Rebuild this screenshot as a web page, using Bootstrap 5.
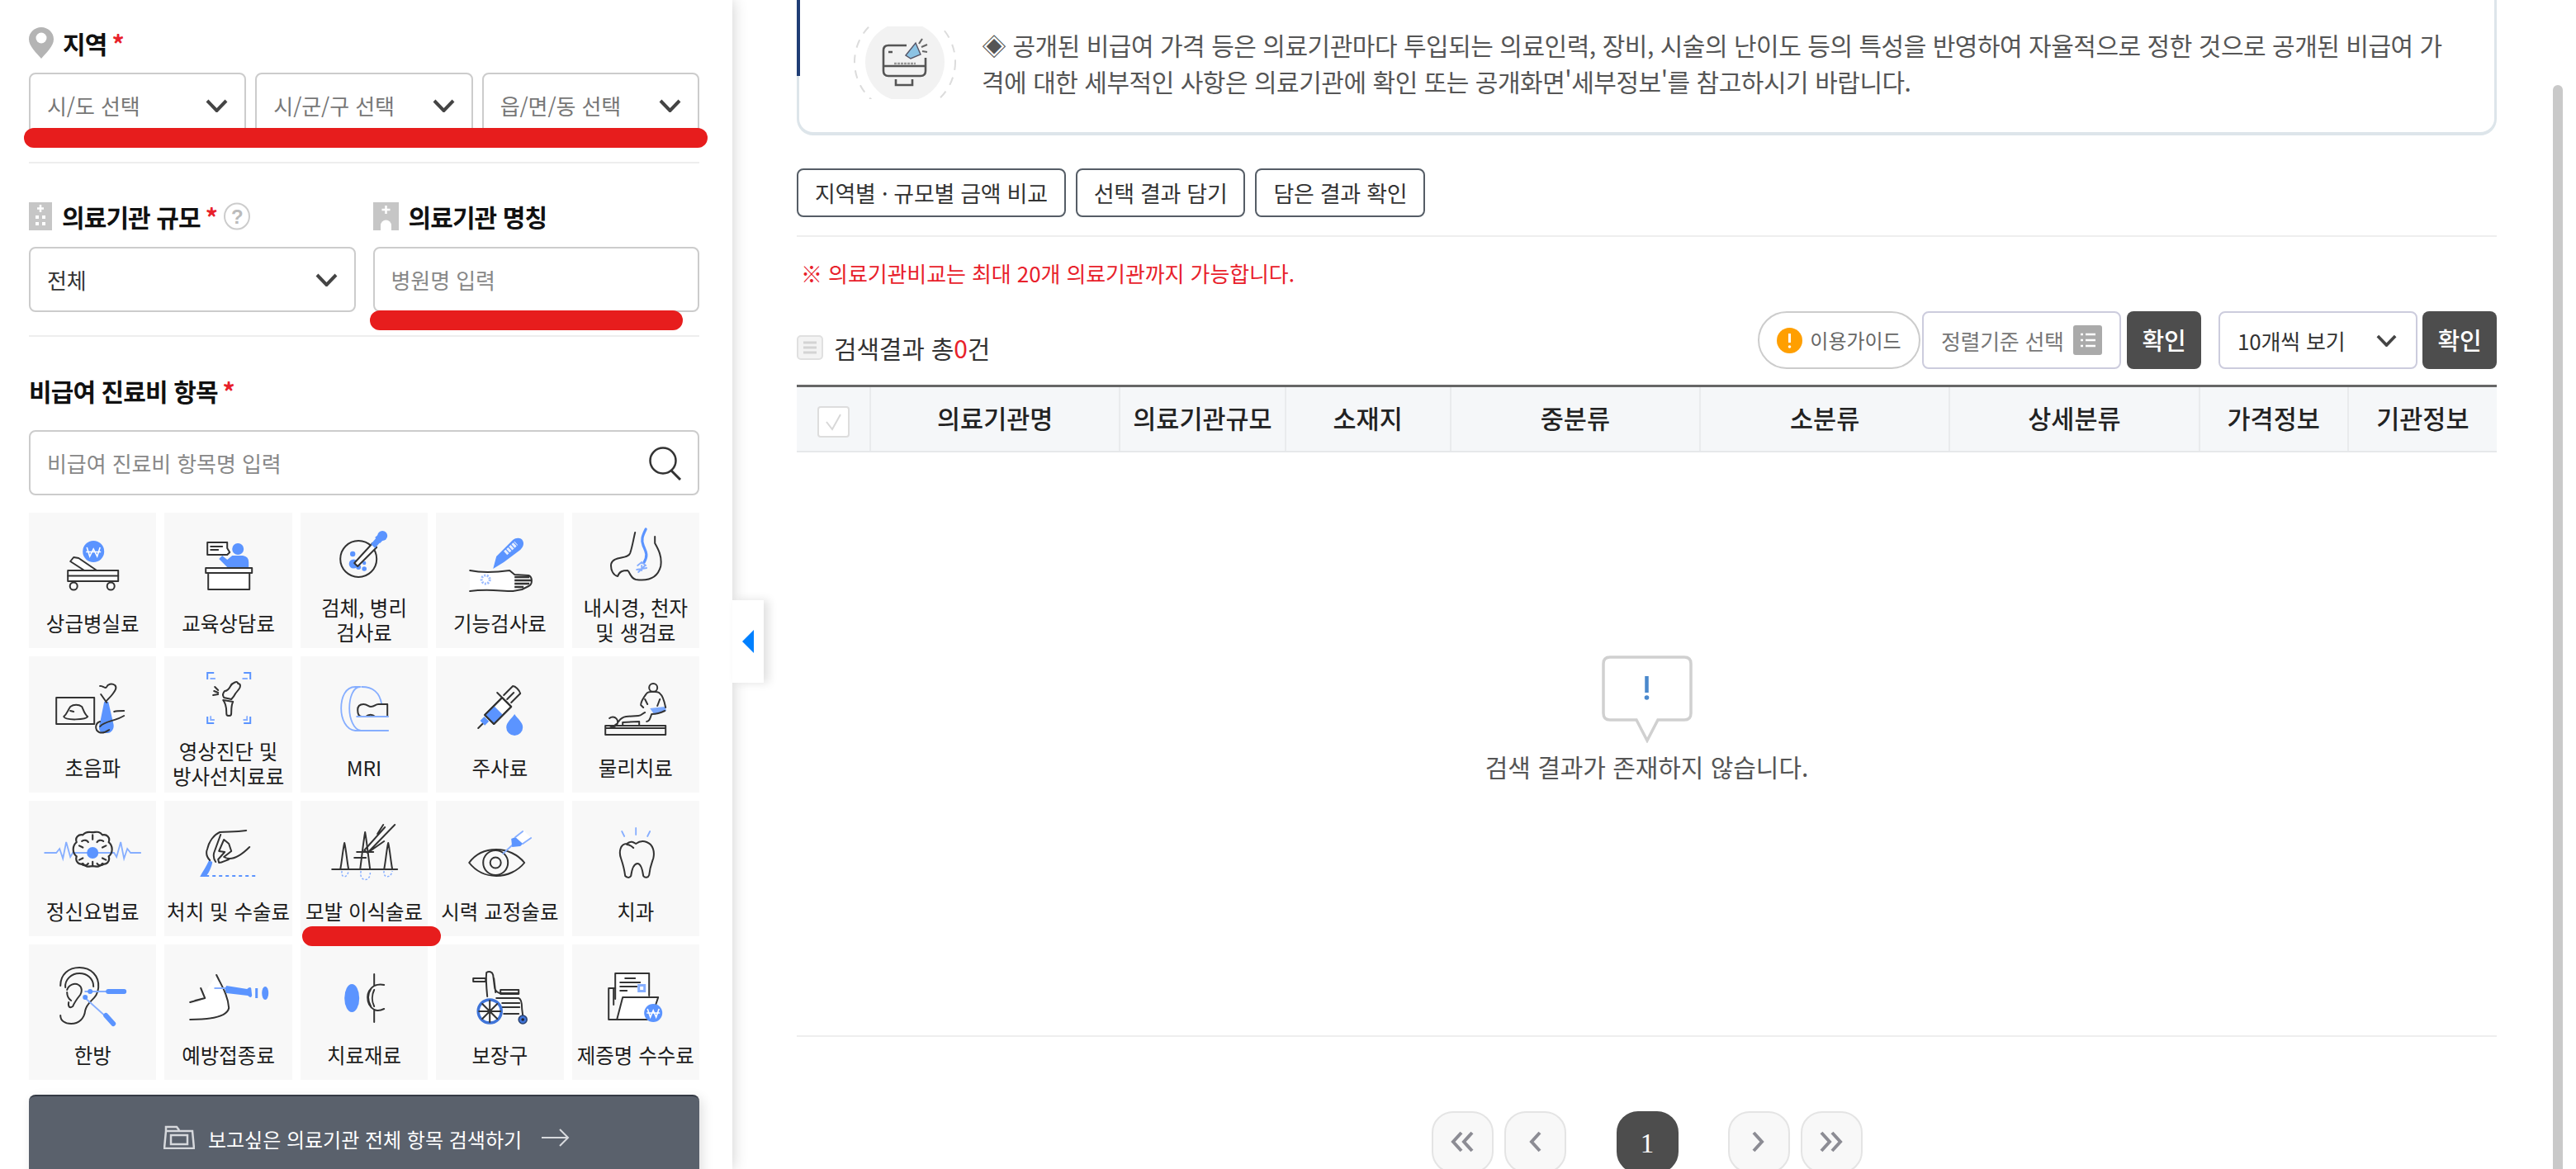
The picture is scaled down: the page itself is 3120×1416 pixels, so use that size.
<!DOCTYPE html>
<html lang="ko">
<head>
<meta charset="utf-8">
<title>비급여 진료비 검색</title>
<link href="https://cdn.jsdelivr.net/npm/bootstrap@5.3.0/dist/css/bootstrap.min.css" rel="stylesheet">
<style>
html,body{height:1416px;overflow:hidden;background:#fff}
body{font-family:"Noto Sans CJK KR","Noto Sans",sans-serif;color:#222;font-size:26px}
.side{width:887px;flex:none;height:1416px;padding:33px 40px 0 35px;position:relative;z-index:2;background:#fff;box-shadow:0 0 18px rgba(0,0,0,.2)}
.lbl{font-size:30px;font-weight:700;letter-spacing:-.9px;color:#111;line-height:34px;margin:0}
.star{color:#e8212b;margin-left:6px;font-weight:700}
.lbl-a{height:38px}
.lbl-a svg{margin-right:11px}
.lbl-b svg{margin-right:12px}
.rule{height:2px;background:#eee}
.rule-t{margin-top:22px}
.sel3{display:grid;grid-template-columns:repeat(3,1fr);column-gap:11px;margin-top:17px}
.two{display:grid;grid-template-columns:1fr 1fr;column-gap:21px}
.form-select.fsel,.form-control.fctl{height:79px;font-size:26px;padding:0 50px 0 20px;border:2px solid #ccc;border-radius:8px;color:#333;letter-spacing:-.1px;box-shadow:none;font-family:inherit}
.form-select.fsel{background-image:url("data:image/svg+xml,%3Csvg xmlns='http://www.w3.org/2000/svg' viewBox='0 0 27 16'%3E%3Cpath d='M2 2l11.500 12L25 2' fill='none' stroke='%23444' stroke-width='4'/%3E%3C/svg%3E");background-size:27px 16px;background-position:right 20px center}
.form-select.dim{color:#777}
.form-control.fctl::placeholder{color:#888;opacity:1}
.gap29{margin-top:29px}
.gap28{margin-top:28px}
.r1{margin-top:47px;height:34px}
.r2{margin-top:20px}
.ttl{margin-top:48px}
.srch{margin-top:31px;position:relative}
.srch svg{position:absolute;right:21px;top:20px}
.qmark{margin-left:8px}
.tiles{display:grid;grid-template-columns:repeat(5,1fr);grid-auto-rows:164.300px;gap:10px;margin-top:21px}
.tile{background:#f8f8f8;display:flex;flex-direction:column;justify-content:space-between;text-align:center;font-size:24.500px;line-height:30px;color:#1c1c1c;padding-bottom:15px;white-space:nowrap}
.tile svg{display:block;width:100%;height:100px;flex:none}
.gs{fill:none;stroke:#333;stroke-width:2;stroke-linecap:round;stroke-linejoin:round}
.gw{fill:#fff;stroke:#333;stroke-width:2;stroke-linecap:round;stroke-linejoin:round}
.bf{fill:#5b94ff}
.bl{fill:none;stroke:#86aeff;stroke-width:1.800;stroke-linecap:round}
.wh{fill:none;stroke:#fff;stroke-width:1.600}
.allbtn{margin-top:18px;height:120px;width:100%;background:#5a616c;border:0;border-top:2px solid #343a44;border-radius:8px 8px 0 0;color:#fff;font-size:24px;display:flex;align-items:flex-start;justify-content:center;padding:34px 0 0 6px;gap:16px;box-shadow:4px 4px 14px rgba(0,0,0,.12)}
.arrow-ic{margin-top:4px}
.mark-bar{position:absolute;background:#e71d1d;border-radius:12px}
.mb1{left:29px;top:155px;width:828px;height:24px}
.mb2{left:448px;top:376px;width:379px;height:24px}
.mb3{left:366px;top:1122px;width:168px;height:24px}
.tab{position:absolute;left:887px;top:727px;width:38px;height:100px;background:#fff;box-shadow:6px 0 12px rgba(0,0,0,.12);display:flex;align-items:center;justify-content:flex-start;padding-left:12px}
.main{flex:1;min-width:0;height:1416px;padding:0 96px 0 78px;position:relative}
.sbar{position:absolute;right:16px;top:103px;bottom:0;width:12px;background:#c9c9c9;border-radius:6px 6px 0 0}
.notice{margin-top:-20px;height:184px;border:3px solid #dde5ea;border-bottom-width:4px;border-radius:20px;padding:49px 0 0 66px;position:relative;font-size:30px;line-height:44px;color:#555;letter-spacing:-.48px;display:flex;gap:31px;white-space:nowrap}
.notice::before{content:"";position:absolute;left:-3px;top:0;width:4px;height:109px;background:#1f3d75}
.notice svg{flex:none;margin-top:0}
.acts{margin-top:40px;gap:12px}
.btn.act{height:59px;border:2px solid #555d66;border-radius:8px;background:#fff;color:#333;font-size:27px;line-height:1;padding:0 20px;letter-spacing:-.3px;display:flex;align-items:center}
.warn{margin-top:24px;line-height:40px;color:#e8212b;font-size:26px;padding-left:5px;letter-spacing:-.1px}
.resrow{margin-top:26px;height:70px}
.restit{font-size:30px;color:#333;letter-spacing:-.2px;gap:13px;line-height:1;padding-top:18px}
.restit b{color:#e8212b;font-weight:400}
.pill{height:70px;width:197px;border:2px solid #ccc;border-radius:35px;color:#666;font-size:24px;gap:9px;background:#fff;margin-right:2px}
.sortbox{height:70px;width:241px;border:2px solid #ccd;border-radius:8px;color:#777;font-size:26px;padding:0 21px;background:#fff;margin-right:7px;letter-spacing:-.3px;white-space:nowrap}
.btn.ok{width:90px;height:70px;background:#4d4d4d;color:#fff;border:0;border-radius:8px;font-size:29px;font-weight:500;padding:0;letter-spacing:-.3px}
.form-select.fsel.cnt{width:241px;height:70px;margin:0 6px 0 21px;border-color:#ccd;background-size:25px 15px;background-position:right 23px center;padding-left:21px;letter-spacing:-.2px}
.thead-tb{table-layout:fixed;width:100%;margin:19px 0 0}
.thead-tb th{height:79px;background:#f5f7f9;border-top:3px solid #666;border-bottom:2px solid #e6e8ea;border-right:2px solid #e9ebed;font-size:30.500px;font-weight:500;color:#222;text-align:center;vertical-align:middle;padding:0;white-space:nowrap}
.thead-tb th:last-child{border-right:0}
.c1{width:89px}.c2,.c5,.c6,.c7{width:302px}.c3,.c4{width:200px}.c8,.c9{width:180px}
.empty{padding-top:246px;text-align:center;height:706px}
.empty svg{display:block;margin:0 auto 6px}
.empty p{font-size:30px;line-height:44px;color:#555;margin:0;letter-spacing:-.05px}
.pagin{margin:90px 0 0;padding:0;justify-content:center}
.pagin .page-link{width:75px;height:75px;display:flex;align-items:center;justify-content:center;background:#f8f8f8;border:2px solid #e4e4e4;border-radius:26px;padding:0;color:#888;margin:0}
.pagin .page-item.active .page-link{background:#4d4d4d;border-color:#4d4d4d;color:#fff;font-size:33px;padding-top:6px;font-family:"Liberation Serif",serif}
.pagin .page-item:not(:first-child) .page-link{margin-left:0}
.pagin .page-item:first-child .page-link,.pagin .page-item:last-child .page-link{border-radius:26px}
.pg-a{margin-right:13px}.pg-b{margin-right:61px}.pg-c{margin-right:60px}
</style>
</head>
<body class="d-flex">

<aside class="side">
  <h2 class="lbl lbl-a d-flex align-items-center">
    <svg width="30" height="38" viewBox="0 0 30 38"><path d="M15 0C6.700 0 0 6.500 0 14.500 0 23 9 31 15 38c6-7 15-15 15-23.500C30 6.500 23.300 0 15 0z" fill="#b4b4b4"/><circle cx="15" cy="13" r="6.500" fill="#fff"/></svg>
    지역<span class="star">*</span>
  </h2>
  <div class="sel3">
    <select class="form-select fsel dim"><option>시/도 선택</option></select>
    <select class="form-select fsel dim"><option>시/군/구 선택</option></select>
    <select class="form-select fsel dim"><option>읍/면/동 선택</option></select>
  </div>
  <div class="rule gap29"></div>

  <div class="two r1">
    <h2 class="lbl lbl-b d-flex align-items-center">
      <svg width="28" height="34" viewBox="0 0 28 34"><rect width="28" height="34" fill="#c6c6c6"/><path d="M14 3v9M10 7.500h8" stroke="#fff" stroke-width="2.500"/><g fill="#fff"><rect x="8" y="16" width="4" height="4"/><rect x="16" y="16" width="4" height="4"/><rect x="8" y="24" width="4" height="4"/><rect x="16" y="24" width="4" height="4"/></g></svg>
      의료기관 규모<span class="star">*</span>
      <svg class="qmark" width="32" height="34" viewBox="0 0 32 34"><ellipse cx="16" cy="17" rx="15" ry="15.500" fill="#fff" stroke="#ccc" stroke-width="2"/><text x="16" y="26" text-anchor="middle" font-size="24" fill="#bbb" font-family="Liberation Sans,sans-serif">?</text></svg>
    </h2>
    <h2 class="lbl lbl-b d-flex align-items-center">
      <svg width="31" height="34" viewBox="0 0 31 34"><rect width="31" height="34" fill="#c6c6c6"/><path d="M15.500 4v10M10.500 9h10" stroke="#fff" stroke-width="2.500"/><path d="M9 34v-6a6.500 6.500 0 0 1 13 0v6z" fill="#fff"/></svg>
      의료기관 명칭
    </h2>
  </div>
  <div class="two r2">
    <select class="form-select fsel"><option>전체</option></select>
    <input class="form-control fctl" type="text" placeholder="병원명 입력">
  </div>
  <div class="rule gap28"></div>

  <h2 class="lbl ttl">비급여 진료비 항목<span class="star">*</span></h2>
  <div class="srch">
    <input class="form-control fctl" type="text" placeholder="비급여 진료비 항목명 입력">
    <svg width="41" height="41" viewBox="0 0 41 41"><circle cx="18" cy="17" r="15.500" fill="none" stroke="#333" stroke-width="2.500"/><path d="M28 29l11 11" stroke="#333" stroke-width="3"/></svg>
  </div>

  <div class="tiles">
    <div class="tile"><svg viewBox="0 0 154 100"><circle class="bf" cx="78" cy="47" r="13"/><path class="wh" d="M70 42l3.500 11 4.500-9 4.500 9 3.500-11M69 47.500h18"/><path class="gw" d="M67 70L50 59l4-5 6 1 22 15z"/><rect class="gw" x="47" y="70" width="61" height="13"/><path class="gs" d="M47 76.500h61"/><circle class="gw" cx="54" cy="89" r="4.500"/><circle class="gw" cx="99" cy="89" r="4.500"/></svg><span>상급병실료</span></div>

    <div class="tile"><svg viewBox="0 0 154 100"><path class="gw" d="M52 36h24v7l3 5-3 3H52z"/><path class="gs" d="M56 41h14M56 45h9"/><circle class="bf" cx="89" cy="44" r="7"/><path class="bf" d="M66 56l4-4 6 5 6-5h13q7 1 7 8v8H78l-8-8z"/><rect class="gw" x="50" y="67" width="56" height="6"/><rect class="gw" x="53" y="73" width="50" height="20"/></svg><span>교육상담료</span></div>

    <div class="tile"><svg viewBox="0 0 154 100"><circle class="gs" cx="70" cy="56" r="22" stroke-width="2.200"/><circle class="bf" cx="63" cy="50" r="3.200"/><circle class="bf" cx="64" cy="62" r="5.500"/><circle class="bf" cx="70" cy="66" r="3"/><circle class="bf" cx="77" cy="61" r="2.200"/><circle class="bf" cx="77" cy="68" r="2.800"/><path class="gw" d="M65 61l22-24 5 5-23 23z"/><path class="bf" d="M85 38l7-8 5 5-7 8z"/><circle class="bf" cx="99" cy="28" r="6"/><path class="bf" d="M90 30l8-7 6 6-8 8z"/></svg><span>검체, 병리<br>검사료</span></div>

    <div class="tile"><svg viewBox="0 0 154 100"><path d="M41 71c14 3 34 2 48-1l6 5 17 1c4 2 4 11 0 13l-8 4-11 2c-15 0-30-3-52 0z" fill="#fff"/><path class="gs" d="M41 70c14 3 34 2 48 0l6 5 17 1c5 2 5 11 0 13l-8 4-11 2c-15 0-30-3-52 0"/><path d="M95 78h18M95 82h20M95 86h18M95 90h11" stroke="#333" stroke-width="2.400"/><circle cx="60" cy="81" r="5" fill="none" stroke="#9cbcff" stroke-width="3" stroke-dasharray="2 1.500"/><path class="bf" d="M69 68l4-15 20-20c4-3 10-3 12 1 2 4 0 8-3 11L82 60z"/><path d="M84 49l13-12" stroke="#fff" stroke-width="6" stroke-dasharray="3 1.200" opacity=".85"/></svg><span>기능검사료</span></div>

    <div class="tile"><svg viewBox="0 0 154 100"><path class="gs" d="M76 24c-2 8-3 16-6 25-3 8-20 3-23 13-1 8 3 14 8 15M55 77c2-6 6-7 12-7M68 71c3 5 4 9 9 10 14 2 26-1 30-16 2-12-3-21-7-28l0-8"/><path d="M89 20c-4 8-6 13-3 20s6 11 1 20" fill="none" stroke="#5b94ff" stroke-width="3.200" stroke-linecap="round"/><path class="bl" d="M84 60l-5 4M84 60l5 4M84 64v6M78 69l12-2M80 72l8-8"/></svg><span>내시경, 천자<br>및 생검료</span></div>

    <div class="tile"><svg viewBox="0 0 154 100"><rect class="gs" x="33" y="50" width="46" height="32" stroke-width="2.200"/><path class="gs" d="M42 73c4-3 5-8 8-12 4-3 10-3 14 0 2 4 3 9 7 12-2 4-27 5-29 0zM50 66l4 1"/><path class="bf" d="M91 55h5l6 26c2 6-2 12-7 12h-6c-5-2-5-8-3-13z"/><path class="gs" d="M93 55c2-3 5-5 8-9 3-4 6-8 3-11-4-3-9-1-10 2-1 3-6-2-8-1M94 56l-7-10M103 67c3-1 8-1 12-1M86 85c5-7 18-6 29-13M86 79c-6 2-7 10-1 13 5 2 9-1 12-3"/></svg><span>초음파</span></div>

    <div class="tile"><svg viewBox="0 0 154 100"><path d="M60 20h-8v8M96 20h8v8M52 73v8h8M104 73v8h-8" fill="none" stroke="#5b94ff" stroke-width="2"/><path class="bl" d="M56 27h5M100 27h-5M56 73v4h4M100 73v4h-4"/><path class="gs" d="M73 42c3 0 5-2 7-6s9-7 9-3c4 0 3 5 1 7l-4 5c-2 4-3 5-5 7l-9-2c-2-3-1-6 1-8zM71 53l12 2c-2 4-2 6-2 12 0 4 0 5-3 5s-3-1-3-5c0-5-1-10-4-14zM60 42l5 2M59 47l6-1M61 37l4 4"/></svg><span>영상진단 및<br>방사선치료료</span></div>

    <div class="tile"><svg viewBox="0 0 154 100"><path class="bl" d="M72 37H66C54 37 49 50 49 63c0 13 6 26 17 27h40M72 37c-9 0-13 14-13 26s5 26 14 27"/><path class="bl" d="M74 37c13 0 22 7 24 21"/><path class="gs" d="M69 65c0-5 3-7 7-7 5 0 6 3 9 3 5 0 5-3 9-3h11v15H90c-3-3-8-3-11 0h-5c-3 0-5-3-5-8z" stroke-width="2.200"/><path class="bl" d="M68 73h38" stroke-width="2"/></svg><span>MRI</span></div>

    <div class="tile"><svg viewBox="0 0 154 100"><path class="gs" d="M51 87l8-8"/><path class="gw" d="M59 71l21-21 11 11-21 21z"/><path class="bf" d="M59 71l11-11 11 11-11 11z"/><rect class="bf" x="55" y="75" width="8" height="7" transform="rotate(45 59 78)"/><path class="gs" d="M59 71l21-21 11 11-21 21zM74 44l17 17M86 52l8-8M82 47l11-11c3 0 8 5 9 9L91 56"/><path class="bf" d="M95 70c4 6 10 10 10 16a10 10 0 0 1-20 0c0-6 6-10 10-16z"/></svg><span>주사료</span></div>

    <div class="tile"><svg viewBox="0 0 154 100"><circle class="gs" cx="98" cy="38" r="5"/><path class="bf" d="M94 63l18-2 2 5-15 4z" opacity=".8"/><path class="gs" d="M90 45c2-3 14-3 16 0 4 3 6 12 7 17M90 45c-3 4-7 9-7 14l3 3M88 52l3 6M106 52l-3 8M112 66c-4 2-9 4-16 4-2 6-3 9-6 9M48 84h-8v11h73V84H48zM40 87h73"/><path class="gs" d="M45 75a6 6 0 1 1 0 9M51 84c6-3 5-10 14-11l15-1c4 0 5-3 8-4"/><path class="gs" d="M61 84v-4l20-1v5" stroke-width="2.400"/></svg><span>물리치료</span></div>

    <div class="tile"><svg viewBox="0 0 154 100"><path class="bl" d="M19 63h14l4-5 4 12 4-20 5 18 3-5h50l3 5 5-18 4 20 4-12 4 5h12"/><g transform="translate(77 63) scale(1.080) translate(-77 -63)"><path class="gs" d="M66 43c4-5 8-3 11-3 4 0 7-2 11 3 5-1 9 3 7 8 5 4 5 12 0 16 2 6-3 10-7 8-4 5-7 3-11 3s-7 2-11-3c-4 2-9-2-7-8-5-4-5-12 0-16-2-5 2-9 7-8z" stroke-width="2.200"/><path class="gs" d="M65 50c3-2 6-1 7 1M89 50c-3-2-6-1-7 1M65 76c3 2 6 1 7-1M89 76c-3 2-6 1-7-1M77 43v5M77 73v5M62 55l4 2M92 55l-4 2M62 71l4-2M92 71l-4-2"/></g><circle class="bf" cx="77" cy="63" r="7"/></svg><span>정신요법료</span></div>

    <div class="tile"><svg viewBox="0 0 154 100"><path class="bf" d="M54 72l4 2c0 4-4 13-8 18h-7c3-6 8-13 11-20z"/><path d="M50 91h62" stroke="#5b94ff" stroke-width="1.800" stroke-dasharray="4 4"/><path class="gs" d="M55 72c-4-4-5-9-3-14 2-9 8-17 15-20 10-1 18 0 32-2M62 74c-2-3-3-7-2-11l8-22M66 75l-1-4 8-9-7-1 6-14 6 5 3 9-9 7c8 5 18 1 31-12M66 75c4 0 8-3 12-4"/></svg><span>처치 및 수술료</span></div>

    <div class="tile"><svg viewBox="0 0 154 100"><path class="gs" d="M38 83h79" stroke-width="2.600"/><path class="gs" d="M48 83c2-10 3-24 5-32 2 8 3 22 5 32M72 83c2-15 4-34 6-45 2 11 4 30 6 45M101 83c2-10 3-24 5-32 2 8 3 22 5 32M68 62h20M65 69h14"/><path class="gs" d="M77 60l25-28M81 63l33-34M77 60l4 3 20-14M100 29l-7 11"/><path d="M50 85c-2 8 6 10 8 0M73 85c-3 14 13 14 11 0M101 85c-2 8 8 10 10 0" fill="none" stroke="#86aeff" stroke-width="1.500" stroke-dasharray="2.500 2"/></svg><span>모발 이식술료</span></div>

    <div class="tile"><svg viewBox="0 0 154 100"><path class="gs" d="M40 75c8-11 20-16 33-16s26 6 34 16c-8 10-21 16-34 16s-25-6-33-16z" stroke-width="2.200"/><circle class="gs" cx="72" cy="75" r="15"/><circle class="gs" cx="72" cy="75" r="6.500" stroke-width="2.200"/><path class="bl" d="M81 64l12-11" stroke-width="2"/><path d="M97 45l9-9 9 9-10 7z" fill="#fff"/><path class="bf" d="M91 46l5-2 9 8-3 3-10 1z"/><path class="bl" d="M96 44l9-7M105 52l10-7" stroke-width="2"/></svg><span>시력 교정술료</span></div>

    <div class="tile"><svg viewBox="0 0 154 100"><path class="gs" d="M66 52c5-4 8-2 11 0 4-3 8-4 13-2 8 3 10 12 8 20-2 6-4 10-5 20-1 3-5 4-7 1-1-7-3-15-7-15-5 0-7 8-8 15-2 3-5 2-7 0-1-9-3-15-5-21-3-8-1-18 7-18z" stroke-width="2.200"/><path class="gs" d="M66 53c3 0 6 2 8 4"/><path class="bl" d="M77 33v8M60 37l3 6M94 37l-3 6" stroke-width="2.200"/></svg><span>치과</span></div>

    <div class="tile"><svg viewBox="0 0 154 100"><path class="gs" d="M38 50c0-14 10-22 23-22 14 0 24 10 23 24-1 15-13 15-16 28-1 10-8 16-17 16-8 0-13-4-13-10" stroke-width="2.200"/><path class="gs" d="M44 52c-1-9 7-17 17-17 9 0 17 6 17 16M46 55c2-6 9-9 14-6 5 3 4 9 2 12-4 5-7 9-9 14M53 75c-4 3-6 0-5-5M46 58c0 5 2 8 5 10"/><path class="bl" d="M68 57h35M67 64l30 27" stroke-width="2"/><circle class="bf" cx="74" cy="57" r="3"/><circle class="bf" cx="68" cy="64" r="3"/><path d="M96 57h19M93 86l9 10" stroke="#5b94ff" stroke-width="6" stroke-linecap="round"/></svg><span>한방</span></div>

    <div class="tile"><svg viewBox="0 0 154 100"><path d="M31 74l11-5 17-26 4-6c5 10 14 26 15 40-2 10-20 14-47 14z" fill="#fff"/><path class="gs" d="M63 37c5 11 14 24 15 40-2 10-20 14-47 14M44 53l5 12-18 5M37 68l12-3"/><path class="bl" d="M61 53h15"/><path class="bf" d="M75 50l25 4c2-2 4-3 5-1l1 9c-1 3-3 2-5 0l-26-3c-2-3-2-6 0-9z"/><ellipse class="bf" cx="122" cy="59" rx="4" ry="8"/><rect class="bf" x="110" y="53" width="3" height="12"/></svg><span>예방접종료</span></div>

    <div class="tile"><svg viewBox="0 0 154 100"><ellipse class="bf" cx="62" cy="65" rx="9" ry="17"/><path class="gs" d="M89 36v14c-6 4-8 8-8 14 0 7 3 12 8 15v15M89 50c5-2 8-2 12-1M89 79c4 2 8 1 12-1M85 54c-4 6-4 14 0 21M89 55c-3 6-3 14 0 20"/></svg><span>치료재료</span></div>

    <div class="tile"><svg viewBox="0 0 154 100"><path class="gs" d="M45 41h15v4H45zM61 34c3-2 7-1 8 3l2 16c1 4 3 5 6 6h23M61 34c-1 8 0 19 1 29M70 41l2 17"/><path class="gs" d="M78 55h22v5H78zM73 65h27c3 1 4 5 4 13l1 8M80 71h21M80 76h21M82 84h18"/><circle cx="65" cy="81" r="14" fill="#fff" stroke="#3f74d8" stroke-width="3.500"/><path class="gs" d="M65 68v26M52 81h26M56 72l18 18M74 72L56 90"/><circle cx="65" cy="81" r="2.500" fill="#333"/><circle cx="105" cy="91" r="5" fill="#3f74d8" stroke="#29416f" stroke-width="1.500"/><circle cx="105" cy="91" r="1.800" fill="#223"/></svg><span>보장구</span></div>

    <div class="tile"><svg viewBox="0 0 154 100"><path class="gw" d="M52 66V35h41v27"/><path class="gs" d="M44 53v38h50M44 53h8M50 53v20"/><path class="gs" d="M64 41h12M58 46h24M58 51h20M58 56h8" stroke="#8a8a8a"/><rect x="79" y="48" width="10" height="10" fill="#86aeff"/><rect x="82" y="51" width="4" height="4" fill="#fff"/><path class="gw" d="M54 91l7-27h43l-9 27z" fill="#f8f8f8"/><circle class="bf" cx="98" cy="83" r="11"/><path class="wh" d="M91 78l3.500 10 3.500-8 3.500 8 3.500-10M90 83h16"/></svg><span>제증명 수수료</span></div>
  </div>

  <button class="allbtn" type="button">
    <svg width="38" height="30" viewBox="0 0 38 30"><path d="M1 29L3 8h32l2 21z M3 8V3h13l3 4" fill="none" stroke="#d6d8dc" stroke-width="2.500"/><rect x="9" y="13" width="20" height="11" fill="none" stroke="#d6d8dc" stroke-width="2.500"/></svg>
    <span>보고싶은 의료기관 전체 항목 검색하기</span>
    <svg class="ms-2 arrow-ic" width="34" height="24" viewBox="0 0 34 24"><path d="M0 12h32M22 2l10 10-10 10" fill="none" stroke="#d8dade" stroke-width="2"/></svg>
  </button>

  <div class="mark-bar mb1"></div>
  <div class="mark-bar mb2"></div>
  <div class="mark-bar mb3"></div>
  <div class="tab"><svg width="14" height="28" viewBox="0 0 14 28"><path d="M14 0v28L0 14z" fill="#0080ff"/></svg></div>
</aside>

<main class="main">
  <section class="notice">
    <svg width="124" height="88" viewBox="0 0 124 88"><circle cx="62" cy="43" r="48" fill="#f2f2f2"/><circle cx="62" cy="43" r="61" fill="none" stroke="#dcdcdc" stroke-width="2" stroke-dasharray="10 9"/><path d="M64 23H42q-6 0-6 6v25q0 6 6 6h39q6 0 6-6V38M36 48h51M42 31h5M51 64v7h20v-7" fill="none" stroke="#555" stroke-width="2.600"/><path d="M49 45h26" stroke="#999" stroke-width="2.500" stroke-dasharray="3 1" fill="none"/><path d="M63 35l12-15 6 14-12 5z" fill="#8cc3e4" stroke="#556" stroke-width="1.400"/><path d="M79 21l4-6M82 25l7-3M83 30l6 1" stroke="#666" stroke-width="2.200" fill="none"/></svg>
    <div>◈ 공개된 비급여 가격 등은 의료기관마다 투입되는 의료인력, 장비, 시술의 난이도 등의 특성을 반영하여 자율적으로 정한 것으로 공개된 비급여 가<br>격에 대한 세부적인 사항은 의료기관에 확인 또는 공개화면'세부정보'를 참고하시기 바랍니다.</div>
  </section>

  <div class="acts d-flex">
    <button class="btn act" type="button">지역별 · 규모별 금액 비교</button>
    <button class="btn act" type="button">선택 결과 담기</button>
    <button class="btn act" type="button">담은 결과 확인</button>
  </div>
  <div class="rule rule-t"></div>
  <p class="warn mb-0">※ 의료기관비교는 최대 20개 의료기관까지 가능합니다.</p>

  <div class="resrow d-flex align-items-center justify-content-between">
    <div class="restit d-flex align-items-center">
      <svg width="32" height="30" viewBox="0 0 32 30"><rect x="1" y="1" width="30" height="28" rx="4" fill="#f3f3f3" stroke="#e0e0e0" stroke-width="2"/><path d="M8 9h16M8 15h16M8 21h16" stroke="#d4d4d4" stroke-width="3"/></svg>
      <span>검색결과 총<b>0</b>건</span>
    </div>
    <div class="d-flex align-items-center">
      <div class="pill d-flex align-items-center justify-content-center">
        <svg width="31" height="31" viewBox="0 0 31 31"><circle cx="15.500" cy="15.500" r="15.500" fill="#ff9f00"/><path d="M15.500 7v11" stroke="#fff" stroke-width="3"/><circle cx="15.500" cy="23" r="1.800" fill="#fff"/></svg>
        <span>이용가이드</span>
      </div>
      <div class="sortbox d-flex align-items-center justify-content-between">
        <span>정렬기준 선택</span>
        <svg width="35" height="36" viewBox="0 0 35 36"><rect width="35" height="36" rx="3" fill="#aaa"/><path d="M9 11h3M15 11h12M9 18h3M15 18h12M9 25h3M15 25h12" stroke="#fff" stroke-width="2.500"/></svg>
      </div>
      <button class="btn ok" type="button">확인</button>
      <select class="form-select fsel cnt"><option>10개씩 보기</option></select>
      <button class="btn ok" type="button">확인</button>
    </div>
  </div>

  <table class="thead-tb">
    <colgroup><col class="c1"><col class="c2"><col class="c3"><col class="c4"><col class="c5"><col class="c6"><col class="c7"><col class="c8"><col class="c9"></colgroup>
    <thead>
      <tr>
        <th><svg width="39" height="38" viewBox="0 0 39 38"><rect x="1" y="1" width="37" height="36" rx="3" fill="#fff" stroke="#ddd" stroke-width="2"/><path d="M11 19l7 9 10-18" fill="none" stroke="#d8d8d8" stroke-width="2"/></svg></th>
        <th>의료기관명</th><th>의료기관규모</th><th>소재지</th><th>중분류</th><th>소분류</th><th>상세분류</th><th>가격정보</th><th>기관정보</th>
      </tr>
    </thead>
  </table>

  <div class="empty">
    <svg width="110" height="106" viewBox="0 0 110 106"><path d="M10 2h90q8 0 8 8v60q0 8-8 8H68l-13 25-13-25H10q-8 0-8-8V10q0-8 8-8z" fill="#fff" stroke="#d0d0d0" stroke-width="3.500"/><path d="M54.500 25v20" stroke="#4a88cc" stroke-width="4.500"/><circle cx="54.500" cy="51" r="2.800" fill="#4a88cc"/></svg>
    <p>검색 결과가 존재하지 않습니다.</p>
  </div>
  <div class="rule"></div>

  <ul class="pagination pagin">
    <li class="page-item pg-a"><a class="page-link" href="#" aria-label="처음"><svg width="30" height="26" viewBox="0 0 30 26"><path d="M14 2L4 13l10 11M27 2L17 13l10 11" fill="none" stroke="#8c8c94" stroke-width="4"/></svg></a></li>
    <li class="page-item pg-b"><a class="page-link" href="#" aria-label="이전"><svg width="16" height="26" viewBox="0 0 16 26"><path d="M14 2L4 13l10 11" fill="none" stroke="#8c8c94" stroke-width="4"/></svg></a></li>
    <li class="page-item active pg-c"><a class="page-link" href="#">1</a></li>
    <li class="page-item pg-a"><a class="page-link" href="#" aria-label="다음"><svg width="16" height="26" viewBox="0 0 16 26"><path d="M2 2l10 11L2 24" fill="none" stroke="#8c8c94" stroke-width="4"/></svg></a></li>
    <li class="page-item"><a class="page-link" href="#" aria-label="마지막"><svg width="30" height="26" viewBox="0 0 30 26"><path d="M3 2l10 11L3 24M16 2l10 11-10 11" fill="none" stroke="#8c8c94" stroke-width="4"/></svg></a></li>
  </ul>
  <div class="sbar"></div>
</main>
</body>
</html>
